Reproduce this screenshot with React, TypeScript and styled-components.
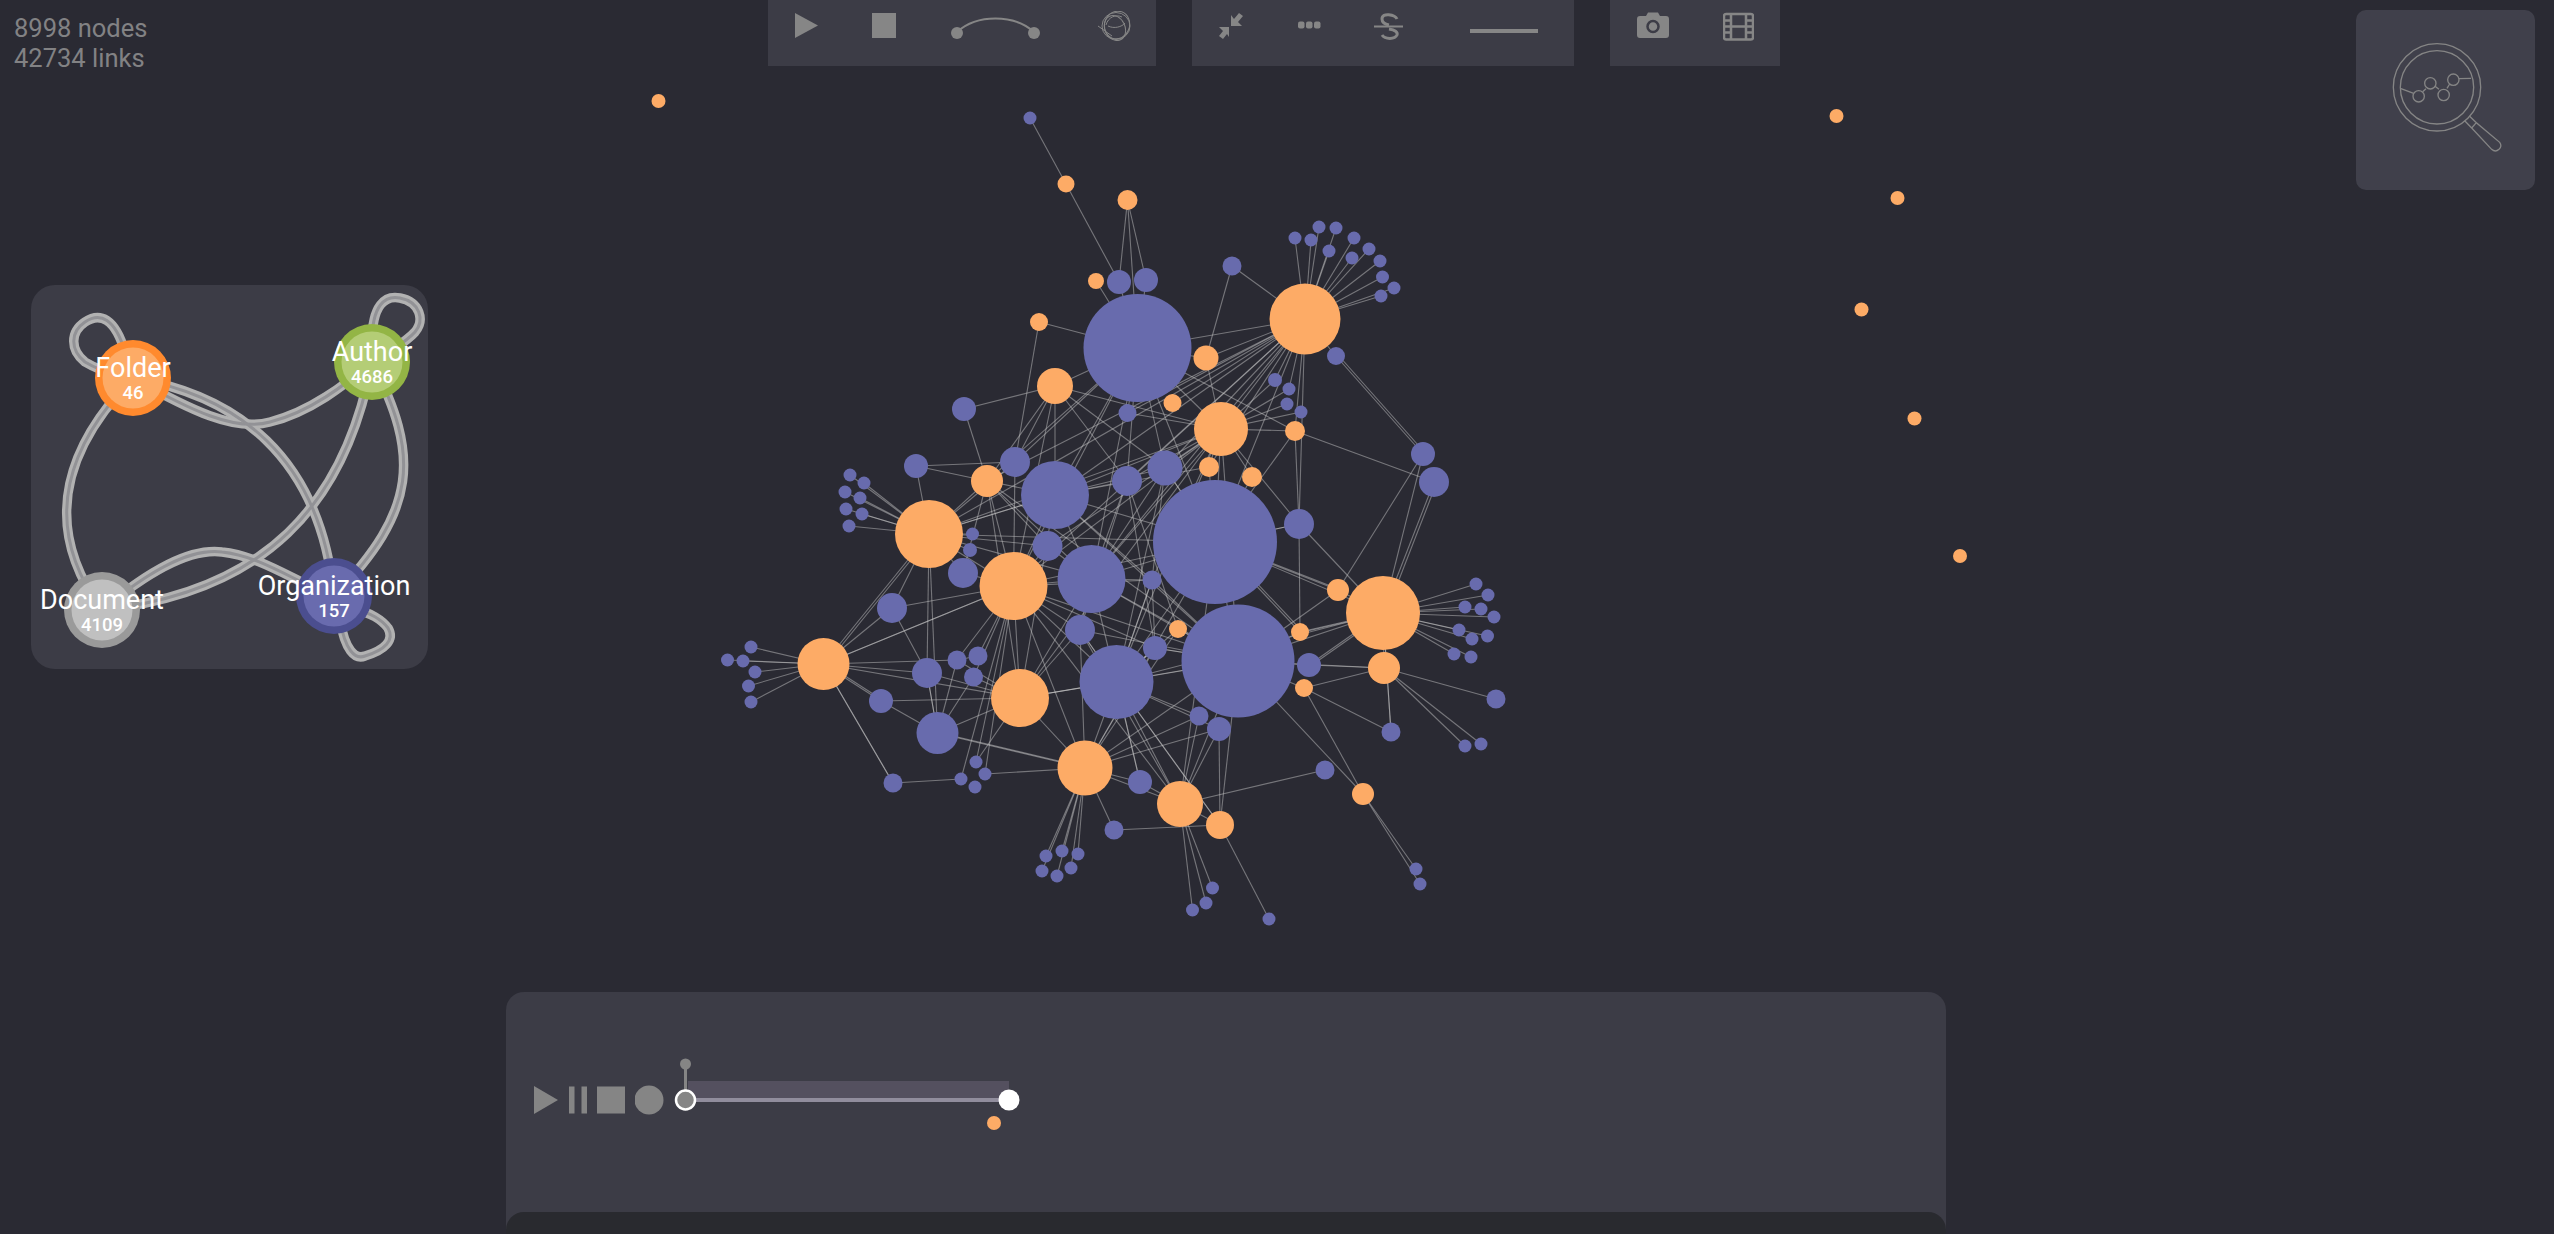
import React from "react";
import styled, { createGlobalStyle } from "styled-components";

const GlobalStyle = createGlobalStyle`
    html, body {
        margin: 0;
        padding: 0;
        background: #2a2a33;
        font-family: Roboto, "Liberation Sans", sans-serif;
    }
`;

const Page = styled.div`
    position: relative;
    width: 100vw;
    height: 100vh;
    overflow: hidden;
    display: flex;
    flex-direction: column;
    background: #2a2a33;
`;

const TopRow = styled.div`
    display: flex;
    align-items: flex-start;
    height: 190px;
    flex-shrink: 0;
`;

const Stats = styled.div`
    width: 754px;
    padding: 13px 0 0 14px;
    font-size: 25.5px;
    line-height: 30px;
    color: #828284;
`;

const ToolbarGroup = styled.div`
    display: flex;
    gap: 36px;
`;

const Toolbar = styled.div<{ $width: number; $start: number }>`
    display: flex;
    align-items: flex-start;
    gap: 54px;
    box-sizing: border-box;
    width: ${(p) => p.$width}px;
    height: 66px;
    padding: 11px 0 0 ${(p) => p.$start}px;
    background: #3c3c46;
`;

const ToolIcon = styled.svg<{ $nudge?: number }>`
    display: block;
    flex-shrink: 0;
    height: 30px;
    margin-left: ${(p) => p.$nudge ?? 0}px;
`;

const Explorer = styled.div`
    margin: 10px 19px 0 auto;
    width: 179px;
    height: 180px;
    border-radius: 10px;
    background: #40404b;
`;

const LegendPanel = styled.div`
    width: 397px;
    height: 384px;
    margin: 95px 0 0 31px;
    border-radius: 24px;
    background: #3c3c46;
    flex-shrink: 0;
`;

const LegendLabel = styled.text`
    font-size: 27px;
    fill: #ffffff;
    text-anchor: middle;
`;

const LegendCount = styled.text`
    font-size: 18.5px;
    font-weight: 500;
    fill: #ffffff;
    text-anchor: middle;
`;

const Dock = styled.div`
    display: flex;
    flex-direction: column;
    width: 1440px;
    height: 242px;
    margin: auto 0 0 506px;
    border-radius: 18px 18px 0 0;
    background: #3c3c46;
    flex-shrink: 0;
`;

const Transport = styled.div`
    flex: 1;
    display: flex;
    align-items: center;
    gap: 10px;
    padding: 0 0 4px 28px;
`;

const TransportIcon = styled.svg`
    display: block;
    height: 30px;
    fill: #858585;
`;

const Timeline = styled.svg`
    display: block;
    width: 350px;
    height: 100px;
`;

const DockFooter = styled.div`
    height: 22px;
    border-radius: 18px 18px 0 0;
    background: #292a2f;
`;

const GraphCanvas = styled.svg`
    position: absolute;
    inset: 0;
    width: 100%;
    height: 100%;
    pointer-events: none;
`;

const GraphLink = styled.line`
    stroke: rgba(200, 200, 200, 0.48);
    stroke-width: 1.1;
`;

const GraphNode = styled.circle<{ $kind: "o" | "p" }>`
    fill: ${(p) => (p.$kind === "o" ? "#fdab66" : "#686bad")};
`;

const ICON = "#868686";

type Node = [number, number, number, "o" | "p"];

const nodes: Record<string, Node> = {
    a: [1137.5, 348, 54, "p"], b: [1215, 542, 62, "p"], c: [1238, 661, 56.5, "p"],
    d: [1055, 495, 34, "p"], e: [1091.5, 579, 34, "p"], f: [1116.5, 682, 37, "p"],
    g: [1305, 319, 35.5, "o"], h: [1221, 429, 27, "o"], i: [1383, 613, 37, "o"],
    j: [929, 534, 34, "o"], k: [1013.5, 586, 34, "o"], l: [1020, 698, 29, "o"],
    m: [823.5, 664, 26, "o"], n: [1085, 768, 27.5, "o"], q: [1180, 804, 23, "o"],
    r: [1055, 386, 18, "o"], s: [987, 481, 16, "o"], t: [1384, 668, 16, "o"],
    u: [1220, 825, 14, "o"],
    o1: [1066, 184, 8.5, "o"], o2: [1127.5, 200, 10, "o"], o3: [1096, 281, 8, "o"],
    o4: [1039, 322, 9, "o"], o5: [1206, 358, 12.5, "o"], o6: [1172.5, 403, 9, "o"],
    o7: [1209, 467, 10, "o"], o8: [1252, 477, 10, "o"], o9: [1295, 431, 10, "o"],
    o10: [1338, 590, 11, "o"], o11: [1178, 629, 9, "o"], o12: [1300, 632, 9, "o"],
    o13: [1304, 688, 9, "o"], o14: [1363, 794, 11, "o"],
    p1: [1030, 118, 6.5, "p"], p2: [1119, 282, 12, "p"], p3: [1146, 280, 12, "p"],
    p4: [1232, 266, 9.5, "p"], p5: [964, 409, 12, "p"], p6: [1127.5, 413, 9, "p"],
    p7: [1015, 462, 15, "p"], p8: [916, 466, 12, "p"], p9: [1127, 481, 15, "p"],
    p10: [1165, 468, 17.5, "p"], p11: [1336, 356, 9, "p"], p12: [1275, 380, 7, "p"],
    p13: [1289, 389, 6.5, "p"], p14: [1287, 404, 6.5, "p"], p15: [1301, 412, 6.5, "p"],
    p16: [1423, 454, 12, "p"], p17: [1434, 482, 15, "p"], p18: [1299, 524, 15, "p"],
    p19: [1152, 580, 9.5, "p"], p20: [1047.5, 546, 15, "p"], p21: [972.5, 534, 6.5, "p"],
    p22: [970, 550, 7, "p"], p23: [963, 573, 15, "p"], p24: [1080, 630, 15, "p"],
    p25: [1155, 648, 12, "p"], p26: [1309, 665, 12, "p"], p27: [1199, 716, 9.5, "p"],
    p28: [1219, 729, 12, "p"], p29: [1496, 699, 9.5, "p"], p30: [1391, 732, 9.5, "p"],
    p31: [1325, 770, 9.5, "p"], p32: [892, 608, 15, "p"], p33: [927, 673, 15, "p"],
    p34: [957, 660, 9.5, "p"], p35: [978, 656, 9.5, "p"], p36: [973.5, 677, 9.5, "p"],
    p37: [881, 701, 12, "p"], p38: [937.5, 733, 21, "p"], p39: [893, 783, 9.5, "p"],
    p40: [1140, 782, 12, "p"], p41: [1114, 830, 9.5, "p"],
    x1: [976, 762, 6.5, "p"], x2: [985, 774, 6.5, "p"], x3: [961, 779, 6.5, "p"], x4: [975, 787, 6.5, "p"],
    y1: [1465, 746, 6.5, "p"], y2: [1481, 744, 6.5, "p"],
    z1: [1416, 869, 6.5, "p"], z2: [1420, 884, 6.5, "p"], z3: [1269, 919, 6.5, "p"],
};

// loose orange nodes with no links
const loose: number[][] = [
    [658.5, 101], [1836.5, 116], [1897.5, 198], [1861.5, 309.5], [1914.5, 418.5], [1960, 556],
];

// fans of small leaves around a hub
const fans: [string, number[][]][] = [
    ["g", [[1295, 238], [1311, 240], [1319, 227], [1336, 228], [1354, 238], [1329, 251], [1352, 258], [1369, 249], [1380, 261], [1382.5, 277], [1394, 288], [1381, 296]]],
    ["j", [[850, 475], [864, 483], [845, 492], [860, 498], [846, 509], [862, 514], [849, 526]]],
    ["m", [[751, 647], [727.5, 660], [743, 661], [755, 672], [748.5, 686], [751, 702]]],
    ["i", [[1476, 584], [1488, 595], [1465, 607], [1481, 609], [1494, 617], [1459, 630], [1472, 639], [1487.5, 636], [1454, 654], [1471, 657]]],
    ["n", [[1046, 856], [1062, 851], [1078, 854], [1042, 871], [1057, 876], [1071, 868]]],
    ["q", [[1212.5, 888], [1206, 903], [1192.5, 910]]],
];

const links: [string, string[]][] = [
    ["p1", ["o1"]],
    ["o1", ["p2"]],
    ["o2", ["p2", "p3", "a"]],
    ["o3", ["a"]],
    ["a", ["p2", "p3", "o4", "g", "r", "s", "p7", "e", "k", "d", "p10", "h", "b", "o9", "p9", "p6", "o5"]],
    ["p4", ["g", "o5"]],
    ["o4", ["p7"]],
    ["p5", ["r", "s"]],
    ["r", ["s", "p7", "d", "p9", "h", "p10", "k"]],
    ["p8", ["s", "j"]],
    ["p7", ["p8", "j", "k"]],
    ["s", ["j", "k", "d", "l", "e", "p20", "c", "p23"]],
    ["g", ["h", "o9", "o5", "o6", "p6", "p9", "p10", "o7", "d", "e", "k", "s", "j", "p18", "b", "p12", "p13"]],
    ["h", ["o5", "p12", "p13", "p14", "p15", "o9", "p10", "p9", "o7", "o8", "e", "d", "k", "j", "f", "p20", "b", "l", "p19", "c", "p6", "p18"]],
    ["o9", ["b", "p18", "p17"]],
    ["p11", ["g", "p16", "p16"]],
    ["p16", ["i", "o10"]],
    ["p17", ["i", "i"]],
    ["p18", ["i", "b"]],
    ["d", ["e", "p9", "p10", "b", "o7", "j", "k", "p19", "c", "l"]],
    ["e", ["j", "k", "f", "b", "p20", "p19", "c", "p24", "l"]],
    ["j", ["k", "p21", "p22", "p23", "p20", "b", "d", "m", "p32", "p33", "m", "p38"]],
    ["k", ["p20", "p24", "f", "c", "b", "p25", "l", "n", "p19", "p23", "p34", "p35", "p32", "m", "x1", "x2", "x3", "q", "p36"]],
    ["f", ["l", "n", "q", "c", "b", "p24", "p25", "o11", "p19", "i", "p27", "p28", "u", "p40"]],
    ["m", ["p32", "p33", "l", "p37", "p37", "p39", "k", "p34"]],
    ["p32", ["p33"]],
    ["p33", ["l", "p38"]],
    ["p34", ["p35", "l", "p38"]],
    ["p37", ["p38", "l"]],
    ["p38", ["l", "n", "n", "p33"]],
    ["p36", ["p38", "l"]],
    ["l", ["n", "f", "c", "p24", "x1"]],
    ["x2", ["n"]],
    ["p39", ["x3", "m"]],
    ["n", ["c", "b", "q", "p40", "p41", "p27", "p28", "p25", "p24", "o11"]],
    ["p40", ["q", "f"]],
    ["p41", ["u"]],
    ["q", ["u", "p31", "p27", "p28", "c", "b", "p24"]],
    ["u", ["p28", "z3", "c", "f"]],
    ["c", ["i", "t", "o12", "o13", "p26", "o10", "b", "o14", "o11", "p25"]],
    ["b", ["i", "o10", "o10", "o12", "o12", "p18", "p10", "o7", "o8"]],
    ["o10", ["i"]],
    ["o12", ["i", "i", "p18"]],
    ["p26", ["t", "i", "i"]],
    ["o13", ["p30", "t", "o14"]],
    ["t", ["p29", "y1", "y2", "i"]],
    ["i", ["p30"]],
    ["p30", ["i"]],
    ["o14", ["z1", "z2"]],
    ["p9", ["p25", "p24", "e", "o11"]],
    ["p10", ["f", "e", "b", "p19"]],
    ["p19", ["f", "c", "p25"]],
    ["p24", ["f", "c"]],
    ["p25", ["f", "c"]],
    ["o11", ["c", "e"]],
];

const legendLinks = [
    "M133 378C72 440 36 520 102 610",
    "M133 378C190 410 235 432 270 422C310 412 345 385 372 362",
    "M133 378C235 395 320 455 334 596",
    "M372 362C345 505 265 592 102 610",
    "M372 362C420 455 418 510 334 596",
    "M102 610C150 570 190 548 222 552C262 556 300 585 334 596",
    "M125 352C115 318 100 312 85 322C70 332 70 350 85 362C95 368 105 372 120 376",
    "M372 342C372 305 385 295 400 298C420 302 425 320 415 332C408 340 395 348 385 355",
    "M340 620C345 650 355 660 365 656C385 650 395 640 388 628C382 620 370 612 355 610",
];

const legendNodes = [
    { label: "Folder", count: "46", x: 133, y: 378, ring: "#ff8a2e", fill: "#fdab66" },
    { label: "Author", count: "4686", x: 372, y: 362, ring: "#93b545", fill: "#b4cd76" },
    { label: "Document", count: "4109", x: 102, y: 610, ring: "#9a9a9a", fill: "#c0c0c0" },
    { label: "Organization", count: "157", x: 334, y: 596, ring: "#4b4e8f", fill: "#696bae" },
];

const Graph = () => {
    const lines: React.ReactNode[] = [];
    links.forEach(([from, targets]) =>
        targets.forEach((to, i) => {
            const a = nodes[from];
            const b = nodes[to];
            // repeated targets are parallel links, shift them a little
            const shift = targets.indexOf(to) === i ? 0 : 3;
            lines.push(<GraphLink key={`${from}-${to}-${i}`} x1={a[0] + shift} y1={a[1]} x2={b[0] + shift} y2={b[1]} />);
        })
    );
    const leaves: React.ReactNode[] = [];
    fans.forEach(([hub, points]) =>
        points.forEach(([x, y], i) => {
            const h = nodes[hub];
            lines.push(<GraphLink key={`${hub}-leaf-${i}`} x1={h[0]} y1={h[1]} x2={x} y2={y} />);
            leaves.push(<GraphNode key={`${hub}-node-${i}`} $kind="p" cx={x} cy={y} r={6.5} />);
        })
    );
    return (
        <GraphCanvas viewBox="0 0 2554 1234" preserveAspectRatio="xMinYMin">
            {lines}
            {leaves}
            {Object.entries(nodes).map(([id, [x, y, r, kind]]) => (
                <GraphNode key={id} $kind={kind} cx={x} cy={y} r={r} />
            ))}
            {loose.map(([x, y]) => (
                <GraphNode key={`${x}`} $kind="o" cx={x} cy={y} r={7} />
            ))}
            <GraphNode $kind="o" cx={994} cy={1123} r={7} />
        </GraphCanvas>
    );
};

const Legend = () => (
    <LegendPanel>
        <svg width="397" height="384" viewBox="31 285 397 384">
            {legendLinks.map((d) => (
                <path key={d} d={d} fill="none" stroke="#b2b2b2" strokeWidth="9.5" />
            ))}
            {legendLinks.map((d) => (
                <path key={d} d={d} fill="none" stroke="#929296" strokeWidth="3" />
            ))}
            {legendNodes.map((n) => (
                <g key={n.label}>
                    <circle cx={n.x} cy={n.y} r="38" fill={n.ring} />
                    <circle cx={n.x} cy={n.y} r="30.5" fill={n.fill} />
                </g>
            ))}
            {legendNodes.map((n) => (
                <g key={n.label}>
                    <LegendLabel x={n.x} y={n.y - 1}>{n.label}</LegendLabel>
                    <LegendCount x={n.x} y={n.y + 21}>{n.count}</LegendCount>
                </g>
            ))}
        </svg>
    </LegendPanel>
);

const TopTools = () => (
    <ToolbarGroup>
        <Toolbar $width={388} $start={27}>
            <ToolIcon width="23" viewBox="0 0 23 30"><path d="M0 2L23 14.5L0 27Z" fill={ICON} /></ToolIcon>
            <ToolIcon width="24" viewBox="0 0 24 30"><rect y="2" width="24" height="25" fill={ICON} /></ToolIcon>
            <ToolIcon width="89" viewBox="0 0 89 30" $nudge={1}>
                <path d="M6 21C26 3 63 3 83 21" fill="none" stroke={ICON} strokeWidth="2" />
                <circle cx="6" cy="22" r="6" fill={ICON} />
                <circle cx="83" cy="22" r="6" fill={ICON} />
            </ToolIcon>
            <ToolIcon width="34" viewBox="0 0 34 30" $nudge={4}>
                <g fill="none" stroke={ICON} strokeWidth="1">
                    <ellipse cx="18" cy="15" rx="14" ry="13.5" />
                    <ellipse cx="19" cy="14" rx="12.5" ry="14" transform="rotate(20 19 14)" />
                    <ellipse cx="17" cy="17" rx="10" ry="13" transform="rotate(-25 17 17)" />
                    <path d="M10 15C16 18 24 16 27 12M8 14C10 6 18 3 24 6M0 15L14 25" />
                </g>
            </ToolIcon>
        </Toolbar>
        <Toolbar $width={382} $start={26}>
            <ToolIcon width="25" viewBox="0 0 25 30">
                <path d="M13 4V15H24L20 11L25 5L21 2L16 8ZM11 16H1L5 20L1 25L5 28L9 23L11 26Z" fill={ICON} />
            </ToolIcon>
            <ToolIcon width="24" viewBox="0 0 24 30">
                <rect x="1" y="10.5" width="6.5" height="7" rx="2" fill={ICON} />
                <rect x="9" y="10.5" width="6.5" height="7" rx="2" fill={ICON} />
                <rect x="17" y="10.5" width="6.5" height="7" rx="2" fill={ICON} />
            </ToolIcon>
            <ToolIcon width="30" viewBox="0 0 30 30" $nudge={-1}>
                <path d="M0 15.5H29" stroke={ICON} strokeWidth="2" />
                <path d="M23 8C21 3.500 8 1 8 8C8 11 10 13 15 14M15 18C21 19 24 21 23 24C21 28.500 11 28.500 8 24" fill="none" stroke={ICON} strokeWidth="3" />
            </ToolIcon>
            <ToolIcon width="68" viewBox="0 0 68 30" $nudge={12}>
                <rect y="18" width="68" height="4" fill={ICON} />
            </ToolIcon>
        </Toolbar>
        <Toolbar $width={170} $start={27}>
            <ToolIcon width="32" viewBox="0 0 32 30">
                <path d="M3 5H9L11 1.500H21L23 5H29Q32 5 32 8V24Q32 27 29 27H3Q0 27 0 24V8Q0 5 3 5Z" fill={ICON} />
                <circle cx="16" cy="15.500" r="5.500" fill="none" stroke="#3c3c46" strokeWidth="2.500" />
            </ToolIcon>
            <ToolIcon width="31" viewBox="0 0 31 30">
                <rect x="1" y="3" width="29" height="25.500" rx="2" fill="none" stroke={ICON} strokeWidth="2.500" />
                <path d="M8 3V28M23 3V28M8 15.500H23M1 9.500H8M1 15.500H8M1 21.500H8M23 9.500H30M23 15.500H30M23 21.500H30" stroke={ICON} strokeWidth="2.500" />
            </ToolIcon>
        </Toolbar>
    </ToolbarGroup>
);

const ExplorerButton = () => (
    <Explorer>
        <svg width="179" height="180" viewBox="47 30 537 540" fill="none" stroke="#858585" strokeWidth="4">
            <circle cx="290" cy="262" r="131" />
            <circle cx="290" cy="262" r="110" />
            <path d="M180 265L220 280M247 275L257 266M283 258L296 268M320 265L328 252M356 236L392 235" />
            <circle cx="235" cy="289" r="17" />
            <circle cx="270" cy="250" r="17" />
            <circle cx="310" cy="285" r="17" />
            <circle cx="339" cy="239" r="17" />
            <path d="M388 349L408 368M373 362L394 384M394 384L408 368L478 427Q486 438 476 448Q465 458 454 448Z" />
        </svg>
    </Explorer>
);

const Playback = () => (
    <Dock>
        <Transport>
            <TransportIcon width="25" viewBox="0 0 25 30"><path d="M0 1L24 15L0 29Z" /></TransportIcon>
            <TransportIcon width="18" viewBox="0 0 18 30">
                <rect y="1.500" width="5.500" height="27" />
                <rect x="12.500" y="1.500" width="5.500" height="27" />
            </TransportIcon>
            <TransportIcon width="28" viewBox="0 0 28 30"><rect y="1.500" width="28" height="27" /></TransportIcon>
            <TransportIcon width="29" viewBox="0 0 29 30"><circle cx="14" cy="15" r="14.500" /></TransportIcon>
            <Timeline viewBox="674 1050 350 100">
                <rect x="688" y="1081" width="321" height="18" fill="#54505f" />
                <rect x="686" y="1098" width="323" height="4" fill="#918d9d" />
                <path d="M685.500 1064V1092" stroke="#858585" strokeWidth="3" />
                <circle cx="685.500" cy="1064" r="5.500" fill="#858585" />
                <circle cx="685.500" cy="1100" r="9.500" fill="#858585" stroke="#ffffff" strokeWidth="2.500" />
                <circle cx="1009" cy="1100" r="10.500" fill="#ffffff" />
            </Timeline>
        </Transport>
        <DockFooter />
    </Dock>
);

const App = () => {
    return (
        <Page>
            <GlobalStyle />
            <TopRow>
                <Stats>
                    <div>8998 nodes</div>
                    <div>42734 links</div>
                </Stats>
                <TopTools />
                <ExplorerButton />
            </TopRow>
            <Legend />
            <Playback />
            <Graph />
        </Page>
    );
};

export default App;
